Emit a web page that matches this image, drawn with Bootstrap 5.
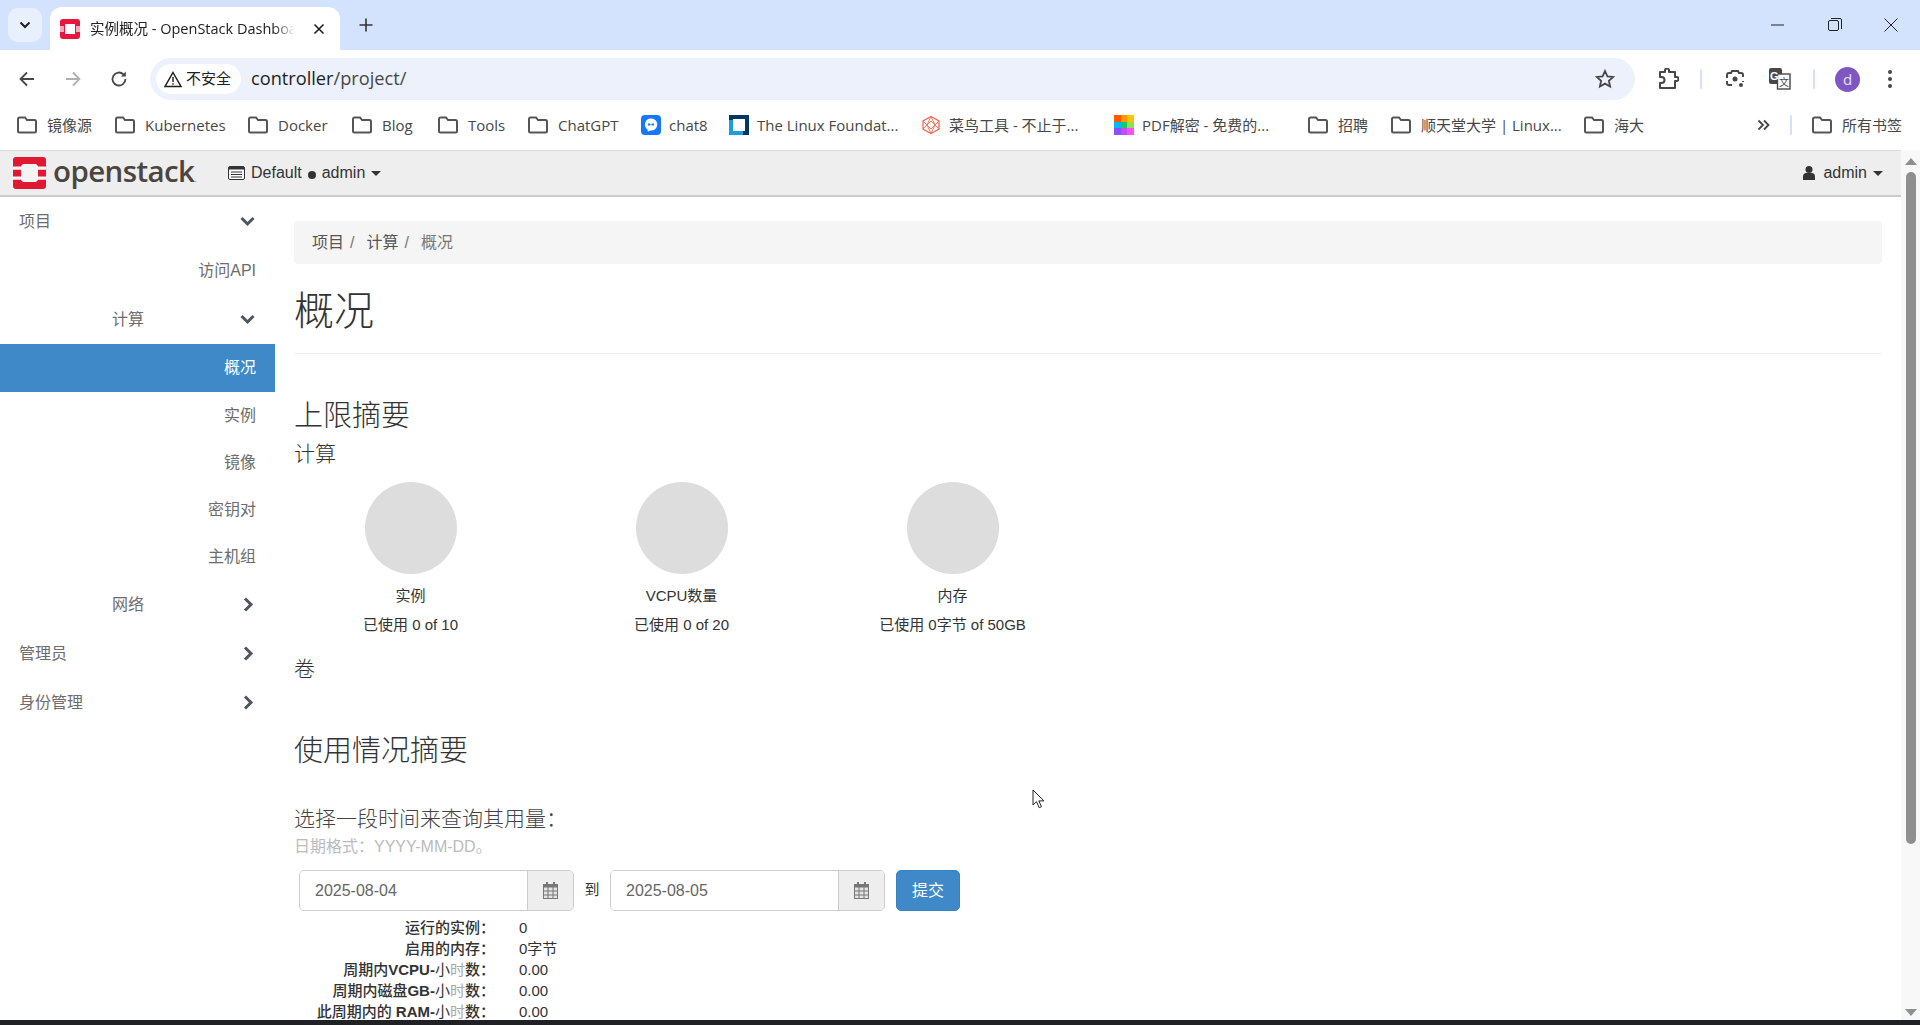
<!DOCTYPE html>
<html lang="zh-CN"><head><meta charset="utf-8"><title>实例概况 - OpenStack Dashboard</title>
<link rel="stylesheet" href="https://cdn.jsdelivr.net/npm/bootstrap@5.3.0/dist/css/bootstrap.min.css">
<style>
html,body{height:100%;overflow:hidden}
body{font-family:"Liberation Sans","Noto Sans CJK SC",sans-serif;font-size:15px;color:#333;background:#fff;position:relative}
.ui-font{font-family:"Open Sans","Noto Sans CJK SC",sans-serif}
.shell{height:1025px}
.tabstrip{height:50px;background:#d3e3fd;flex:none}
.tabdrop{width:34px;height:34px;margin:8px 0 0 8px;border-radius:10px;background:#e9f0fd}
.tabbody{width:290px;height:43px;margin:7px 0 0 8px;background:#fff;border-radius:12px 12px 0 0;padding:0 15px 0 10px}
.tabtitle{width:205px;overflow:hidden;white-space:nowrap;font-size:14.5px;color:#222;margin-left:10px;-webkit-mask-image:linear-gradient(90deg,#000 90%,transparent)}
.tabplus{margin-left:18px}
.wincontrols{margin-left:auto;width:149px;padding:0 22px 0 0}
.toolbar{height:50px;flex:none;background:#fff;border-radius:12px 12px 0 0;padding:8px 0 0 17px}
.navbtns{height:42px;gap:26px}
.urlbar{margin-left:21px;width:1485px;height:42px;background:#ecf1fb;border-radius:21px;padding:0 20px 0 6px}
.chip{height:30px;width:85px;background:#fff;border-radius:15px;padding-left:8px;font-size:15px;color:#1f1f1f}
.urltext{margin-left:10px;font-size:18.2px;color:#1f1f1f;font-family:"Open Sans",sans-serif}
.urltext i{font-style:normal;color:#474747}
.toolicons{padding-left:22px;height:42px}
.sepv{width:2px;height:20px;background:#d3e3fd;border-radius:1px}
.ti-sep1{margin-left:21px}.ti-lens{margin-left:23px}.ti-tr{margin-left:24px}.ti-sep2{margin-left:22px}.ti-av{margin-left:20px}.ti-dots{margin-left:27px}
.avatar{width:25px;height:25px;border-radius:50%;background:#7e57c2;color:#e8e0f5;font-size:15px;line-height:24px;text-align:center}
.bookmarks{height:50px;flex:none;background:#fff;padding:0 0 0 17px;font-size:15px;color:#474747;white-space:nowrap;display:grid;grid-template-columns:98px 133px 104px 86px 90px 113px 88px 192px 193px 194px 83px 193px 80px 1fr;align-items:center}
.bmitem{gap:10px}
.bmitem.favi{gap:8px}
.bmend{margin-left:auto;padding-right:18px;gap:20px}
.bmlast{gap:10px}
.pagearea{flex:1;min-height:0;overflow:hidden}
.pagemain{flex:1;min-width:0;overflow:hidden}
.osnav{height:47px;background:#eee;border-bottom:2px solid #ccc;border-top:1px solid #ddd;padding:0 18px 0 13px;font-size:16px;color:#333;flex:none}
.oslogo{font-family:"Open Sans",sans-serif;font-size:29.5px;font-weight:600;letter-spacing:-.6px;color:#4a4541;line-height:1;margin-left:7px;margin-top:-5px;width:140px;white-space:nowrap}
.oslogo b{font-weight:400;font-size:9px;color:#8a7f78;letter-spacing:0}
.osctx{margin-left:35px;gap:6px}
.caretdn{width:0;height:0;border:5px solid transparent;border-top-color:#333;border-bottom:0}
.dotm{width:8px;height:8px;border-radius:50%;background:#333;margin-top:3px}
.osuser{gap:6px}
.osuser svg{margin-right:2px}
.sidenav{width:275px;flex:none;font-size:16px;color:#6d6d6d}
.navrow{height:49px;padding:0 19px;justify-content:flex-end}
.navrow.subrow{height:47px}
.navrow.act{height:48px;background:#3f89c8;color:#fff}
.lvl0{justify-content:space-between}
.lvl1name{width:125px;text-align:right;margin-right:auto}
.chev{color:#4d5560}
.chevd{margin-right:1px}
.chevr{margin-right:2px}
.contentp{flex:1;min-width:0;padding:24px 19px 0 19px;position:relative}
.crumbs{height:43px;background:#f5f5f5;border-radius:4px;padding:0 18px;font-size:16px;color:#444}
.crumbs span{color:#555}
.crumbs em{font-style:normal;color:#777;margin:0 12px 0 6px}
.crumbs .here{color:#777}
.ptitle{font-size:40px;font-weight:300;color:#333;line-height:46px;margin:24px 0 0;height:65px}
.rule{border-top:1px solid #eee;margin:0}
.h-big{font-size:29px;font-weight:300;color:#333;line-height:40px;margin:0}
.h-sub{font-size:21px;font-weight:300;color:#333;line-height:26px;margin:0}
.limit-h{margin-top:42px}
.limit-sub{margin-top:5px}
.vol-h{margin-top:21px}
.usage-h{margin-top:49px}
.pick-h{margin-top:35px;color:#444}
.charts{margin-left:-19px;margin-top:15px}
.chartcol{width:271px;text-align:center;font-size:15px;color:#333}
.piecircle{width:92px;height:92px;border-radius:50%;background:#ddd;margin:0 auto}
.chartname{line-height:20px;margin-top:12px}
.chartused{line-height:20px;margin-top:9px}
.helptxt{color:#bbb;font-size:16px;line-height:20px;margin-top:5px}
.datesrow{margin:13px 0 0 5px}
.dategrp{width:275px;height:41px;border:1px solid #ccc;border-radius:5px;overflow:hidden}
.dateinp{flex:1;padding-left:15px;font-size:16px;color:#666;background:#fff}
.dateadd{width:46px;background:#eee;border-left:1px solid #ccc;color:#555}
.datejoin{width:36px;text-align:center;font-size:15px;color:#333}
.btnsub{width:64px;height:41px;margin-left:11px;background:#3f89c8;border:1px solid #3a82bf;color:#fff;font-size:16px;border-radius:5px;padding:0}
.statlist{margin:6px 0 0;font-size:15px;line-height:21px}
.statrow{display:flex}
.statrow dt{width:201px;text-align:right;font-weight:500;color:#333;margin:0}
.statrow dd{margin:0 0 0 24px;color:#333}
.statrow dt b{font-weight:700}
.statrow dt u{text-decoration:none;font-weight:400}
.statrow dt s{text-decoration:none;font-weight:400;color:#aaa}
.scrolltrack{width:19px;flex:none;background:#f8f8f8;padding-top:1px}
.sthumb{width:10px;height:672px;background:#8f8f8f;border-radius:5px;margin:7px auto 0}
.sup{width:0;height:0;border:6px solid transparent;border-bottom:7px solid #8f8f8f;border-top:0;margin:7px auto 0}
.sdn{width:0;height:0;border:6px solid transparent;border-top:7px solid #8f8f8f;border-bottom:0;margin:auto auto 4px}
.taskedge{height:5px;flex:none;background:#202124}
.pointer{position:absolute;left:1032px;top:789px;z-index:5}
</style></head><body>
<div class="shell d-flex flex-column">
 <div class="tabstrip d-flex">
  <div class="tabdrop d-flex align-items-center justify-content-center"><svg width="12" height="8" viewBox="0 0 12 8"><path d="M1.500 1.500 6 6l4.500-4.500" fill="none" stroke="#1f1f1f" stroke-width="2"/></svg></div>
  <div class="tabbody d-flex align-items-center">
   <svg width="20" height="20" viewBox="0 0 20 20"><rect width="20" height="20" rx="3" fill="#e8173f"/><path d="M0 7h4v6H0zM16 7h4v6h-4z" fill="#f9a9ba"/><rect x="5" y="5" width="10" height="10" fill="#fff"/></svg>
   <div class="tabtitle ui-font">实例概况 - OpenStack Dashboard</div>
   <svg class="ms-auto" width="12" height="12" viewBox="0 0 12 12"><path d="M1.500 1.500l9 9M10.500 1.500l-9 9" stroke="#1f1f1f" stroke-width="1.600"/></svg>
  </div>
  <div class="tabplus d-flex align-items-center"><svg width="16" height="16" viewBox="0 0 16 16"><path d="M8 1.500v13M1.500 8h13" stroke="#333" stroke-width="1.600"/></svg></div>
  <div class="wincontrols d-flex align-items-center justify-content-between">
   <svg width="14" height="14" viewBox="0 0 14 14"><path d="M0 7h13" stroke="#222" stroke-width="1"/></svg>
   <svg width="14" height="14" viewBox="0 0 14 14"><rect x=".5" y="2.500" width="10" height="10" rx="1.500" fill="none" stroke="#222"/><path d="M3 .5h9a1.500 1.500 0 0 1 1.500 1.500v9" fill="none" stroke="#222"/></svg>
   <svg width="14" height="14" viewBox="0 0 14 14"><path d="M.5.5l13 13M13.500.5l-13 13" stroke="#222"/></svg>
  </div>
 </div>
 <div class="toolbar d-flex">
  <div class="navbtns d-flex align-items-center">
   <svg width="20" height="20" viewBox="0 0 20 20"><path d="M17 10H4M10 3.500 3.500 10l6.500 6.500" fill="none" stroke="#474747" stroke-width="1.800"/></svg>
   <svg width="20" height="20" viewBox="0 0 20 20"><path d="M3 10h13M10 3.500l6.500 6.500-6.500 6.500" fill="none" stroke="#b0b0b0" stroke-width="1.800"/></svg>
   <svg width="20" height="20" viewBox="0 0 20 20"><path d="M16.500 10a6.500 6.500 0 1 1-2-4.700" fill="none" stroke="#474747" stroke-width="1.800"/><path d="M16.800 2.500v5h-5z" fill="#474747"/></svg>
  </div>
  <div class="urlbar d-flex align-items-center">
   <div class="chip d-flex align-items-center gap-1"><svg width="18" height="17" viewBox="0 0 18 17"><path d="M9 1.500 17 15.500H1z" fill="none" stroke="#1f1f1f" stroke-width="1.500"/><path d="M9 6v5M9 12.200v1.600" stroke="#1f1f1f" stroke-width="1.400"/></svg>不安全</div>
   <div class="urltext">controller<i>/project/</i></div>
   <svg class="ms-auto" width="20" height="20" viewBox="0 0 20 20"><path d="m10 2 2.400 5.300 5.800.6-4.300 3.900 1.200 5.700-5.100-2.900-5.100 2.900 1.200-5.700L1.800 7.900l5.800-.6z" fill="none" stroke="#474747" stroke-width="1.800"/></svg>
  </div>
  <div class="toolicons d-flex align-items-center">
   <svg width="22" height="22" viewBox="0 0 22 22"><path d="M3 4h5V2.500a2 2 0 0 1 4 0V4h6v5h1.500a2 2 0 0 1 0 4H18v7H3v-5h1.500a3 3 0 0 0 0-6H3z" fill="none" stroke="#474747" stroke-width="2" stroke-linejoin="round"/></svg>
   <div class="sepv ti-sep1"></div>
   <svg class="ti-lens" width="20" height="20" viewBox="0 0 20 20"><path d="M2 9V6a2 2 0 0 1 2-2h2l1-2h6l1 2h2a2 2 0 0 1 2 2v2M2 12v2a2 2 0 0 0 2 2h3M18 12v1" fill="none" stroke="#474747" stroke-width="2"/><circle cx="10" cy="10" r="2.500" fill="#474747"/><circle cx="16" cy="16" r="2" fill="#474747"/></svg>
   <svg class="ti-tr" width="22" height="22" viewBox="0 0 22 22"><rect x="0" y="0" width="13" height="16" rx="2" fill="#474747"/><rect x="8.500" y="6" width="12.500" height="15" fill="#fff" stroke="#474747" stroke-width="1.400"/><text x="1" y="12" font-family="Liberation Sans" font-size="11" font-weight="700" fill="#fff">G</text><text x="10" y="17.500" font-family="Noto Sans CJK SC" font-size="10" fill="#474747">文</text></svg>
   <div class="sepv ti-sep2"></div>
   <div class="avatar ti-av ui-font">d</div>
   <svg class="ti-dots" width="6" height="20" viewBox="0 0 6 20"><circle cx="3" cy="3" r="2" fill="#474747"/><circle cx="3" cy="10" r="2" fill="#474747"/><circle cx="3" cy="17" r="2" fill="#474747"/></svg>
  </div>
 </div>
 <div class="bookmarks ui-font">
  <div class="bmitem d-flex align-items-center"><svg width="20" height="18" viewBox="0 0 20 18"><defs><path id="fld" d="M1 3a1.500 1.500 0 0 1 1.500-1.500H8L10 4h7.500A1.500 1.500 0 0 1 19 5.500V15a1.500 1.500 0 0 1-1.500 1.500h-15A1.500 1.500 0 0 1 1 15z" fill="none" stroke="#555" stroke-width="2"/></defs><use href="#fld"/></svg>镜像源</div>
  <div class="bmitem d-flex align-items-center"><svg width="20" height="18" viewBox="0 0 20 18"><use href="#fld"/></svg>Kubernetes</div>
  <div class="bmitem d-flex align-items-center"><svg width="20" height="18" viewBox="0 0 20 18"><use href="#fld"/></svg>Docker</div>
  <div class="bmitem d-flex align-items-center"><svg width="20" height="18" viewBox="0 0 20 18"><use href="#fld"/></svg>Blog</div>
  <div class="bmitem d-flex align-items-center"><svg width="20" height="18" viewBox="0 0 20 18"><use href="#fld"/></svg>Tools</div>
  <div class="bmitem d-flex align-items-center"><svg width="20" height="18" viewBox="0 0 20 18"><use href="#fld"/></svg>ChatGPT</div>
  <div class="bmitem favi d-flex align-items-center"><svg width="20" height="20" viewBox="0 0 20 20"><rect width="20" height="20" rx="4" fill="#1677ff"/><path d="M10 3.500a6 6 0 0 0-3.500 10.900l.3 2.300 2.500-1.300A6 6 0 1 0 10 3.500z" fill="#fff"/><path d="M7 8.500h2.200v2H7zM10.800 8.500H13v2h-2.200zM9 9.200h2v.6H9z" fill="#1677ff"/></svg>chat8</div>
  <div class="bmitem favi d-flex align-items-center"><svg width="20" height="20" viewBox="0 0 20 20"><rect width="20" height="20" fill="#003764"/><path d="M0 5h4v11h10v4H0z" fill="#1f9de0"/><path d="M4 4h12v12H4z" fill="#fff"/></svg>The Linux Foundat...</div>
  <div class="bmitem favi d-flex align-items-center"><svg width="20" height="20" viewBox="0 0 20 20"><path d="M10 1.500 18 6v8l-8 4.500L2 14V6z" fill="none" stroke="#f46b55" stroke-width="1.300"/><path d="M2 6l8 8 8-8M10 1.500 6 10l4 8.500 4-8.500zM2 14l8-8 8 8" fill="none" stroke="#f46b55" stroke-width=".9"/></svg>菜鸟工具 - 不止于...</div>
  <div class="bmitem favi d-flex align-items-center"><svg width="20" height="20" viewBox="0 0 20 20"><path d="M0 0h7v7H0z" fill="#ff5a00"/><path d="M7 0h6v7H7z" fill="#ff9800"/><path d="M13 0h7v7h-7z" fill="#ffc400"/><path d="M0 7h7v6H0z" fill="#00b8f0"/><path d="M7 7h6v6H7z" fill="#18c964"/><path d="M13 7h7v6h-7z" fill="#8ee05a"/><path d="M0 13h7v7H0z" fill="#8e4dff"/><path d="M7 13h6v7H7z" fill="#c04dff"/><path d="M13 13h7v7h-7z" fill="#ff4dff"/></svg>PDF解密 - 免费的...</div>
  <div class="bmitem d-flex align-items-center"><svg width="20" height="18" viewBox="0 0 20 18"><use href="#fld"/></svg>招聘</div>
  <div class="bmitem d-flex align-items-center"><svg width="20" height="18" viewBox="0 0 20 18"><use href="#fld"/></svg>顺天堂大学 | Linux...</div>
  <div class="bmitem d-flex align-items-center"><svg width="20" height="18" viewBox="0 0 20 18"><use href="#fld"/></svg>海大</div>
  <div class="bmend d-flex align-items-center">
   <svg width="13" height="12" viewBox="0 0 13 12"><path d="m1.500 1.500 4.500 4.500-4.500 4.500M7 1.500l4.500 4.500L7 10.500" fill="none" stroke="#474747" stroke-width="1.800"/></svg>
   <div class="sepv"></div>
   <div class="bmlast d-flex align-items-center"><svg width="20" height="18" viewBox="0 0 20 18"><use href="#fld"/></svg>所有书签</div>
  </div>
 </div>
 <div class="pagearea d-flex">
  <div class="pagemain d-flex flex-column">
   <nav class="osnav d-flex align-items-center">
    <svg width="33" height="32" viewBox="0 0 33 32"><rect width="33" height="32" rx="3" fill="#e01933"/><path d="M10 7h13l2 2v14l-2 2H10l-2-2V9z" fill="#f4f4f4"/><path d="M0 9.500h8v3.300H0zM0 19.500h8v3.300H0zM25 9.500h8v3.300h-8zM25 19.500h8v3.300h-8z" fill="#f4f4f4"/></svg>
    <div class="oslogo">openstack<b>.</b></div>
    <div class="osctx d-flex align-items-center"><svg width="17" height="14" viewBox="0 0 17 14"><rect x=".5" y=".5" width="16" height="13" rx="1.500" fill="#fff" stroke="#333"/><path d="M1 1h15v2.500H1z" fill="#333"/><path d="M3 6h11M3 8.500h11M3 11h11" stroke="#333"/></svg><span>Default</span><span class="dotm"></span><span>admin</span><span class="caretdn"></span></div>
    <div class="osuser ms-auto d-flex align-items-center"><svg width="12" height="14" viewBox="0 0 12 14"><circle cx="6" cy="3.500" r="3.500" fill="#333"/><path d="M0 14v-3.500C0 8.500 1.500 7 3 7h6c1.500 0 3 1.500 3 3.500V14z" fill="#333"/></svg><span>admin</span><span class="caretdn"></span></div>
   </nav>
   <div class="d-flex flex-grow-1 position-relative">
    <aside class="sidenav">
     <div class="navrow lvl0 d-flex align-items-center">项目<svg class="chev chevd" width="15" height="11" viewBox="0 0 15 11"><path d="M1.500 2 7.500 8l6-6" fill="none" stroke="currentColor" stroke-width="3"/></svg></div>
     <div class="navrow d-flex align-items-center">访问API</div>
     <div class="navrow d-flex align-items-center"><span class="lvl1name">计算</span><svg class="chev chevd" width="15" height="11" viewBox="0 0 15 11"><path d="M1.500 2 7.500 8l6-6" fill="none" stroke="currentColor" stroke-width="3"/></svg></div>
     <div class="navrow act d-flex align-items-center">概况</div>
     <div class="navrow subrow d-flex align-items-center">实例</div>
     <div class="navrow subrow d-flex align-items-center">镜像</div>
     <div class="navrow subrow d-flex align-items-center">密钥对</div>
     <div class="navrow subrow d-flex align-items-center">主机组</div>
     <div class="navrow d-flex align-items-center"><span class="lvl1name">网络</span><svg class="chev chevr" width="11" height="15" viewBox="0 0 11 15"><path d="m2 1.500 6 6-6 6" fill="none" stroke="currentColor" stroke-width="3"/></svg></div>
     <div class="navrow lvl0 d-flex align-items-center">管理员<svg class="chev chevr" width="11" height="15" viewBox="0 0 11 15"><path d="m2 1.500 6 6-6 6" fill="none" stroke="currentColor" stroke-width="3"/></svg></div>
     <div class="navrow lvl0 d-flex align-items-center">身份管理<svg class="chev chevr" width="11" height="15" viewBox="0 0 11 15"><path d="m2 1.500 6 6-6 6" fill="none" stroke="currentColor" stroke-width="3"/></svg></div>
    </aside>
    <main class="contentp">
     <div class="crumbs d-flex align-items-center"><span>项目</span><em>/</em><span>计算</span><em>/</em><span class="here">概况</span></div>
     <h1 class="ptitle">概况</h1>
     <div class="rule"></div>
     <h2 class="h-big limit-h">上限摘要</h2>
     <h3 class="h-sub limit-sub">计算</h3>
     <div class="charts d-flex">
      <div class="chartcol"><div class="piecircle"></div><div class="chartname">实例</div><div class="chartused">已使用 0 of 10</div></div>
      <div class="chartcol"><div class="piecircle"></div><div class="chartname">VCPU数量</div><div class="chartused">已使用 0 of 20</div></div>
      <div class="chartcol"><div class="piecircle"></div><div class="chartname">内存</div><div class="chartused">已使用 0字节 of 50GB</div></div>
     </div>
     <h3 class="h-sub vol-h">卷</h3>
     <h2 class="h-big usage-h">使用情况摘要</h2>
     <h3 class="h-sub pick-h">选择一段时间来查询其用量：</h3>
     <div class="helptxt">日期格式：YYYY-MM-DD。</div>
     <div class="datesrow d-flex align-items-center">
      <div class="dategrp d-flex"><div class="dateinp d-flex align-items-center">2025-08-04</div><div class="dateadd d-flex align-items-center justify-content-center"><svg width="15" height="17" viewBox="0 0 15 17"><path d="M3 0h2v3H3zM10 0h2v3h-2z" fill="#777"/><path d="M0 2h15v15H0z" fill="#777"/><path d="M1 5.500h3.500v3H1zM5.500 5.500h4v3h-4zM10.500 5.500H14v3h-3.500zM1 9.500h3.500v3H1zM5.500 9.500h4v3h-4zM10.500 9.500H14v3h-3.500zM1 13.500h3.500V16H1zM5.500 13.500h4V16h-4zM10.500 13.500H14V16h-3.500z" fill="#e4e4e4"/></svg></div></div>
      <div class="datejoin">到</div>
      <div class="dategrp d-flex"><div class="dateinp d-flex align-items-center">2025-08-05</div><div class="dateadd d-flex align-items-center justify-content-center"><svg width="15" height="17" viewBox="0 0 15 17"><path d="M3 0h2v3H3zM10 0h2v3h-2z" fill="#777"/><path d="M0 2h15v15H0z" fill="#777"/><path d="M1 5.500h3.500v3H1zM5.500 5.500h4v3h-4zM10.500 5.500H14v3h-3.500zM1 9.500h3.500v3H1zM5.500 9.500h4v3h-4zM10.500 9.500H14v3h-3.500zM1 13.500h3.500V16H1zM5.500 13.500h4V16h-4zM10.500 13.500H14V16h-3.500z" fill="#e4e4e4"/></svg></div></div>
      <button class="btn btnsub" type="button">提交</button>
     </div>
     <dl class="statlist">
      <div class="statrow"><dt>运行的实例：</dt><dd>0</dd></div>
      <div class="statrow"><dt>启用的内存：</dt><dd>0字节</dd></div>
      <div class="statrow"><dt>周期内<b>VCPU-</b><u>小</u><s>时</s>数：</dt><dd>0.00</dd></div>
      <div class="statrow"><dt>周期内磁盘<b>GB-</b><u>小</u><s>时</s>数：</dt><dd>0.00</dd></div>
      <div class="statrow"><dt>此周期内的 <b>RAM-</b><u>小</u><s>时</s>数：</dt><dd>0.00</dd></div>
     </dl>
    </main>
   </div>
  </div>
  <div class="scrolltrack d-flex flex-column"><div class="sup"></div><div class="sthumb"></div><div class="sdn"></div></div>
 </div>
 <div class="taskedge"></div>
</div>
<svg class="pointer" width="14" height="20" viewBox="0 0 14 20"><path d="M1 1v15l3.500-3.300 2.700 6 2.300-1-2.700-5.800H12z" fill="#fff" stroke="#222" stroke-width="1"/></svg>
</body></html>
